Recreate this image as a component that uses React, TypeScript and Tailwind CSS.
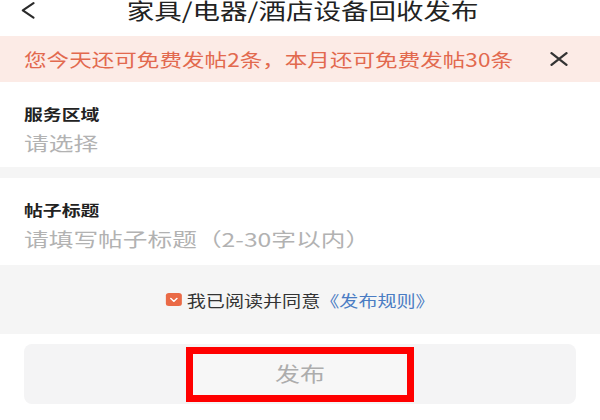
import { useState } from "react";
import type { ReactNode } from "react";

const cjk = "font-['Noto_Sans_CJK_SC','Noto_Sans',sans-serif]";

// the screen capture is stretched sideways, so text is widened to match it
function Wide({ children, className = "" }: { children: ReactNode; className?: string }) {
  return <span className={`inline-block whitespace-nowrap ${className}`}>{children}</span>;
}

function BackIcon() {
  return (
    <svg width="14" height="17" viewBox="0 0 14 17" fill="none" className="text-[#2a2a2a]">
      <polyline points="12.5,1.2 1.8,8.3 12.5,15.6" stroke="currentColor" strokeWidth="2.1" strokeLinecap="round" strokeLinejoin="round" />
    </svg>
  );
}

function CloseIcon() {
  return (
    <svg width="18" height="14" viewBox="0 0 18 14" fill="none" className="text-[#333]">
      <path d="M1.5 1.2 L16.5 12.8 M16.5 1.2 L1.5 12.8" stroke="currentColor" strokeWidth="2.3" strokeLinecap="round" />
    </svg>
  );
}

function Field({ label, placeholder, height }: { label: string; placeholder: string; height: string }) {
  return (
    <div className={`flex flex-col items-start bg-white pl-6 ${height}`}>
      <Wide className="mt-[23px] origin-left scale-x-[1.3] text-[14.5px] leading-[18px] font-bold text-[#222]">{label}</Wide>
      <Wide className="mt-[9px] origin-left scale-x-[1.3] text-[19px] leading-[22px] text-[#b2b2b2]">{placeholder}</Wide>
    </div>
  );
}

export default function App() {
  const [showTip, setShowTip] = useState(true);
  const [agreed, setAgreed] = useState(true);

  return (
    <div className={`flex h-[420px] w-[600px] flex-col overflow-hidden bg-white ${cjk}`}>
      <header className="grid h-[36px] shrink-0 grid-cols-[1fr_auto_1fr] items-start bg-white">
        <button className="pl-[21px] pt-[2px]">
          <BackIcon />
        </button>
        <h1 className="pl-[6px] text-[22px] leading-[18px] font-normal text-[#222]">
          <Wide className="origin-center scale-x-[1.25]">家具/电器/酒店设备回收发布</Wide>
        </h1>
        <div />
      </header>

      {showTip && (
        <div className="flex h-[46px] shrink-0 items-center justify-between bg-[#fcebe6] pl-6 pr-[32px]">
          <Wide className="origin-left scale-x-[1.22] text-[18.5px] leading-[20px] text-[#e2694e]">
            您今天还可免费发帖2条，本月还可免费发帖30条
          </Wide>
          <button onClick={() => setShowTip(false)} className="flex">
            <CloseIcon />
          </button>
        </div>
      )}

      <Field label="服务区域" placeholder="请选择" height="h-[85px]" />
      <div className="h-[11px] shrink-0 bg-[#f5f5f5]" />
      <Field label="帖子标题" placeholder="请填写帖子标题（2-30字以内）" height="h-[87px]" />

      <div className="flex h-[69px] shrink-0 items-center justify-center bg-[#f5f5f5]">
        <div className="flex origin-center scale-x-[1.23] items-center">
          <button
            onClick={() => setAgreed(!agreed)}
            className="mr-[4px] flex h-[13px] w-[13px] items-center justify-center rounded-[2.5px] bg-[#ea6a46]"
          >
            {agreed && (
              <svg width="7" height="6" viewBox="0 0 7 6" fill="none">
                <polyline points="1,1.4 3.5,4.4 6,1.4" stroke="white" strokeWidth="1.3" strokeLinecap="round" strokeLinejoin="round" />
              </svg>
            )}
          </button>
          <span className="whitespace-nowrap text-[15.5px] leading-[18px] text-[#333]">
            我已阅读并同意<a className="text-[#4a7cc3]">《发布规则》</a>
          </span>
        </div>
      </div>

      <div className="flex flex-1 flex-col bg-white px-6 pt-[10px]">
        <button className="flex h-[60px] items-center justify-center rounded-[8px] bg-[#f4f4f5]">
          <span className="flex h-[55px] w-[228px] items-center justify-center border-[7px] border-[#ff0000] bg-[#f7f7f7] text-[20px] leading-[22px] text-[#adadad]">
            <Wide className="origin-center scale-x-[1.25]">发布</Wide>
          </span>
        </button>
      </div>
    </div>
  );
}
